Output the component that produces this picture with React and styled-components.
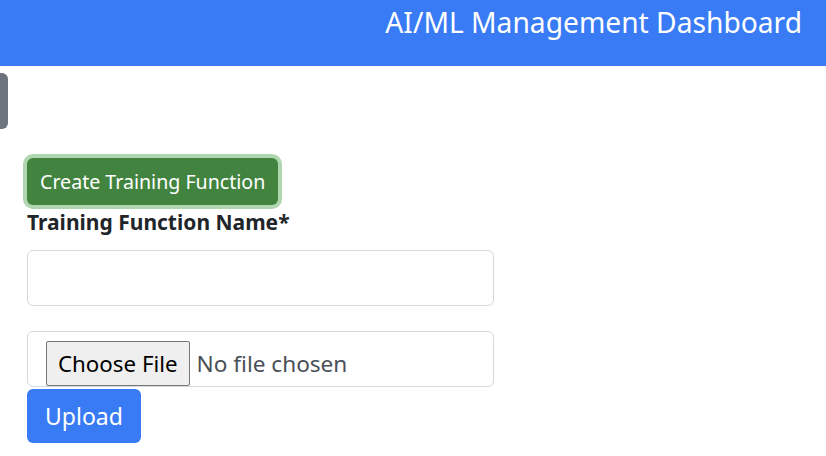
import React from "react";
import styled, { createGlobalStyle } from "styled-components";

const Global = createGlobalStyle`
  html, body { margin: 0; padding: 0; background: #fff; }
  body { font-family: "Noto Sans", "Open Sans", sans-serif; color: #212529; }
  * { box-sizing: border-box; }
`;

const Header = styled.header`
  height: 66px;
  background: #387bf5;
  display: flex;
  justify-content: flex-end;
  align-items: flex-start;
  padding: 2px 24px 0 0;
`;

const Title = styled.h1`
  margin: 0;
  font-weight: 400;
  font-size: 28.2px;
  line-height: 40px;
  color: #fff;
`;

const SideTab = styled.button`
  display: block;
  margin-top: 7px;
  width: 8px;
  height: 56px;
  border: none;
  padding: 0;
  background: #6c757d;
  border-radius: 0 6px 6px 0;
`;

const Main = styled.main`
  padding: 29px 0 0 27px;
  display: flex;
  flex-direction: column;
  align-items: flex-start;
`;

const Button = styled.button`
  font-family: inherit;
  color: #fff;
  border: none;
  border-radius: 6px;
  cursor: pointer;
  background: ${(p) => (p.$variant === "success" ? "#42843f" : "#387bf5")};
  font-size: ${(p) => (p.$size === "lg" ? "23px" : "19.6px")};
  height: ${(p) => (p.$size === "lg" ? "54px" : "47px")};
  padding: ${(p) => (p.$size === "lg" ? "0 18px" : "0 13px")};
  box-shadow: ${(p) => (p.$focused ? "0 0 0 4px #b0d6b0" : "none")};
`;

const Label = styled.label`
  margin-top: 3px;
  font-size: 21px;
  font-weight: 700;
  line-height: 28px;
  color: #212529;
`;

const TextInput = styled.input`
  margin-top: 14px;
  width: 467px;
  height: 56px;
  border: 1px solid #d5d8dc;
  border-radius: 6px;
  font-family: inherit;
  font-size: 20px;
  padding: 0 16px;
  outline: none;
`;

const FileInput = styled.input`
  margin-top: 25px;
  width: 467px;
  height: 56px;
  border: 1px solid #d5d8dc;
  border-radius: 6px;
  font-family: inherit;
  font-size: 22.6px;
  color: #495057;
  padding: 9px 18px 0;
  &::file-selector-button {
    font-family: inherit;
    font-size: 22.3px;
    height: 45px;
    padding: 0 11px;
    margin-right: 7px;
    color: #000;
    background: #efefef;
    border: 1px solid #767676;
    border-radius: 2px;
  }
`;

const UploadRow = styled.div`
  margin-top: 2px;
`;

export default function App() {
  return (
    <>
      <Global />
      <Header>
        <Title>AI/ML Management Dashboard</Title>
      </Header>
      <SideTab aria-label="toggle sidebar" />
      <Main>
        <Button $variant="success" $focused>
          Create Training Function
        </Button>
        <Label htmlFor="tfname">Training Function Name*</Label>
        <TextInput id="tfname" type="text" />
        <FileInput type="file" />
        <UploadRow>
          <Button $size="lg">Upload</Button>
        </UploadRow>
      </Main>
    </>
  );
}
